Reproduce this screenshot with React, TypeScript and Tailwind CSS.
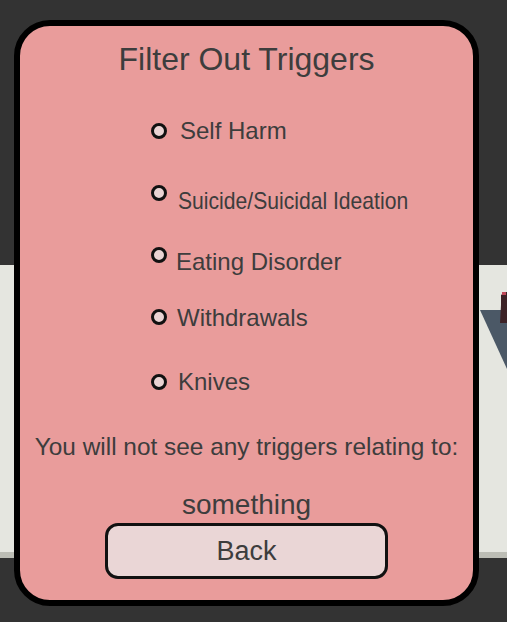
import React from "react";

const font = { fontFamily: '"Liberation Sans", Arial, sans-serif' };

function Circle({ mt }: { mt: string }) {
  return (
    <div
      className={`${mt} w-[16px] h-[16px] shrink-0 rounded-full border-[3px] border-[#111111] bg-[#ead3d3]`}
    />
  );
}

export default function App() {
  return (
    <div className="relative w-[507px] h-[622px] overflow-hidden bg-[#333333]" style={font}>
      {/* background scene band */}
      <div className="relative mt-[265px] h-[293px] bg-[#e5e6e0] border-b-[6px] border-[#bcbdb5]">
        <svg
          className="absolute left-[479px] top-0"
          width="28"
          height="120"
          viewBox="0 0 28 120"
        >
          <polygon points="1,45 28,45 28,104" fill="#4b5866" />
          <path d="M22,30 L26,27 L28,27 L28,58 L21,58 L22,40 Z" fill="#3c2226" />
          <rect x="23" y="27" width="4" height="3" fill="#c04858" />
        </svg>
      </div>

      {/* modal */}
      <div className="absolute left-[14px] top-[20px] w-[465px] h-[586px] rounded-[36px] border-[6px] border-black bg-[#e99c9b] flex flex-col text-[#3d3d3d]">
        <div className="mt-[17px] text-center text-[32px] leading-[32px]">Filter Out Triggers</div>

        <div className="flex flex-col pl-[131px]">
          <div className="mt-[44px] flex items-start">
            <Circle mt="mt-[4px]" />
            <span className="ml-[13px] text-[24px] leading-[24px]">Self Harm</span>
          </div>
          <div className="mt-[42px] flex items-start">
            <Circle mt="mt-0" />
            <span className="ml-[11px] mt-[4px] text-[24px] leading-[24px] whitespace-nowrap origin-left scale-x-[0.88]">
              Suicide/Suicidal Ideation
            </span>
          </div>
          <div className="mt-[34px] flex items-start">
            <Circle mt="mt-0" />
            <span className="ml-[9px] mt-[3px] text-[24px] leading-[24px]">Eating Disorder</span>
          </div>
          <div className="mt-[32px] flex items-start">
            <Circle mt="mt-[3px]" />
            <span className="ml-[10px] text-[24px] leading-[24px]">Withdrawals</span>
          </div>
          <div className="mt-[40px] flex items-start">
            <Circle mt="mt-[4px]" />
            <span className="ml-[11px] text-[24px] leading-[24px]">Knives</span>
          </div>
        </div>

        <div className="mt-[41px] text-center text-[24.4px] leading-[24px] whitespace-nowrap">
          You will not see any triggers relating to:
        </div>
        <div className="mt-[32px] text-center text-[28px] leading-[28px]">something</div>

        <div className="mt-[4px] flex justify-center">
          <button className="w-[283px] h-[56px] rounded-[13px] border-[3px] border-[#111111] bg-[#ead6d6] text-[27px] leading-[27px] text-[#3d3d3d]">
            Back
          </button>
        </div>
      </div>
    </div>
  );
}
